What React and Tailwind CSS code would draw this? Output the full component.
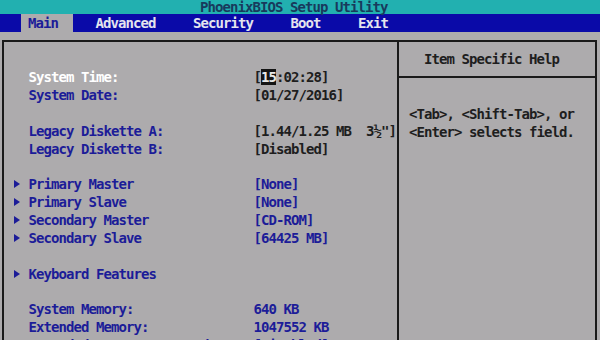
const FONT = { fontFamily: '"DejaVu Sans Mono", "Liberation Mono", monospace' }

const ROWS = [
  { label: 'System Time:', value: 'time', labelCls: 'text-white' },
  { label: 'System Date:', value: '[01/27/2016]' },
  null,
  { label: 'Legacy Diskette A:', value: '[1.44/1.25 MB  3½"]' },
  { label: 'Legacy Diskette B:', value: '[Disabled]' },
  null,
  { label: 'Primary Master', value: '[None]', arrow: true, valueCls: 'text-[#1c1c98]' },
  { label: 'Primary Slave', value: '[None]', arrow: true, valueCls: 'text-[#1c1c98]' },
  { label: 'Secondary Master', value: '[CD-ROM]', arrow: true, valueCls: 'text-[#1c1c98]' },
  { label: 'Secondary Slave', value: '[64425 MB]', arrow: true, valueCls: 'text-[#1c1c98]' },
  null,
  { label: 'Keyboard Features', arrow: true },
  null,
  { label: 'System Memory:', value: '640 KB', valueCls: 'text-[#1c1c98]' },
  { label: 'Extended Memory:', value: '1047552 KB', valueCls: 'text-[#1c1c98]' },
  { label: 'Extended Memory Reserved:', value: '[Disabled]', valueCls: 'text-[#1c1c98]' },
]

function Row({ row }) {
  if (!row) return <div className="h-[17.86px]" />
  return (
    <div className="flex h-[17.86px] items-center">
      <span className="flex w-[15px] items-center">
        {row.arrow && (
          <svg width="6" height="8" viewBox="0 0 6 8" className="ml-[0.5px]">
            <path d="M0 0 L6 4 L0 8 Z" fill="#1c1c98" />
          </svg>
        )}
      </span>
      <span className={`w-[225px] whitespace-pre ${row.labelCls || 'text-[#1c1c98]'}`}>{row.label}</span>
      {row.value === 'time' ? (
        <span className="whitespace-pre text-[#1e1e1e]">
          [<span className="bg-[#141414] text-[#e8e8e8]">15</span>:02:28]
        </span>
      ) : (
        <span className={`whitespace-pre ${row.valueCls || 'text-[#1e1e1e]'}`}>{row.value}</span>
      )}
    </div>
  )
}

export default function App() {
  return (
    <div
      className="h-[340px] w-[600px] overflow-hidden bg-[#adabad] text-[14px] font-bold leading-none tracking-[-0.93px]"
      style={FONT}
    >
      {/* Title */}
      <div className="flex h-[14.3px] items-center bg-[#22b0b0] pl-[200px] text-[#183a5c]">
        <span className="whitespace-pre">PhoenixBIOS Setup Utility</span>
      </div>

      {/* Menu */}
      <div className="flex h-[17.86px] items-stretch bg-[#0a0aa8] pl-[20.5px] text-[#e4e4ee]">
        <span className="flex items-center whitespace-pre bg-[#adabad] text-[#1c1c98]">{' Main  '}</span>
        <span className="flex items-center whitespace-pre">{'   Advanced     Security     Boot     Exit'}</span>
      </div>

      {/* Panel */}
      <div className="ml-[2px] mt-[8px] flex h-[320px] w-[595px] border-2 border-[#1a1a1a]">
        <div className="w-[395px] border-r-2 border-[#1a1a1a] pl-[9.5px] pt-[26px]">
          {ROWS.map((row, i) => (
            <Row key={i} row={row} />
          ))}
        </div>
        <div className="flex-1">
          <div className="flex h-[36px] items-center border-b-2 border-[#1a1a1a] pl-[25px] text-[#1e1e1e]">
            <span className="whitespace-pre">Item Specific Help</span>
          </div>
          <div className="pl-[10px] pt-[27px] text-[#1e1e1e]">
            <div className="flex h-[17.86px] items-center whitespace-pre">{'<Tab>, <Shift-Tab>, or'}</div>
            <div className="flex h-[17.86px] items-center whitespace-pre">{'<Enter> selects field.'}</div>
          </div>
        </div>
      </div>
    </div>
  )
}
